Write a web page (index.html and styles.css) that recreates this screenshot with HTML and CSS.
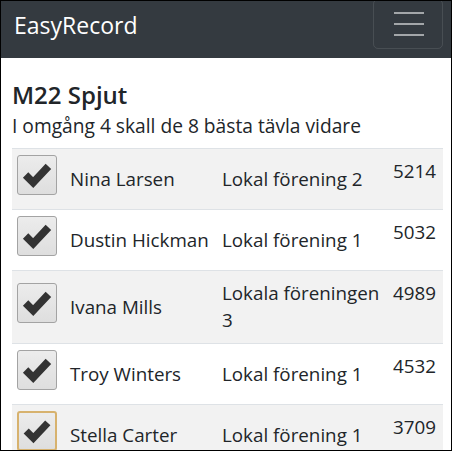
FILE: index.html
```html
<!DOCTYPE html>
<html lang="sv">
<head>
    <meta charset="UTF-8">
    <meta name="viewport" content="width=device-width, initial-scale=1.0">
    <title>EasyRecord</title>
    <link rel="stylesheet" href="styles.css">
</head>
<body>
<div class="frame">
    <nav class="navbar">
        <a class="brand" href="#">EasyRecord</a>
        <button class="toggler" type="button">
            <span class="bar"></span>
            <span class="bar"></span>
            <span class="bar"></span>
        </button>
    </nav>

    <div class="content">
        <h5 class="title">M22 Spjut</h5>
        <p class="info">I omgång 4 skall de 8 bästa tävla vidare</p>

        <table class="results">
            <colgroup>
                <col class="c-check">
                <col class="c-name">
                <col class="c-club">
                <col class="c-score">
            </colgroup>
            <tr>
                <td class="check"><span class="box"><svg viewBox="0 0 40 40"><polyline points="8,20 16,28 32,11"/></svg></span></td>
                <td>Nina Larsen</td>
                <td>Lokal förening 2</td>
                <td class="score">5214</td>
            </tr>
            <tr>
                <td class="check"><span class="box"><svg viewBox="0 0 40 40"><polyline points="8,20 16,28 32,11"/></svg></span></td>
                <td>Dustin Hickman</td>
                <td>Lokal förening 1</td>
                <td class="score">5032</td>
            </tr>
            <tr>
                <td class="check"><span class="box"><svg viewBox="0 0 40 40"><polyline points="8,20 16,28 32,11"/></svg></span></td>
                <td>Ivana Mills</td>
                <td>Lokala föreningen 3</td>
                <td class="score">4989</td>
            </tr>
            <tr>
                <td class="check"><span class="box"><svg viewBox="0 0 40 40"><polyline points="8,20 16,28 32,11"/></svg></span></td>
                <td>Troy Winters</td>
                <td>Lokal förening 1</td>
                <td class="score">4532</td>
            </tr>
            <tr>
                <td class="check"><span class="box focus"><svg viewBox="0 0 40 40"><polyline points="8,20 16,28 32,11"/></svg></span></td>
                <td>Stella Carter</td>
                <td>Lokal förening 1</td>
                <td class="score">3709</td>
            </tr>
        </table>
    </div>
</div>
</body>
</html>
```

FILE: styles.css
```css
body {
    margin: 0;
    font-family: "Open Sans", Arial, sans-serif;
    font-size: 18.8px;
    line-height: 27px;
    color: #212529;
    background: #fff;
}

.frame {
    width: 452px;
    height: 451px;
    border: 1px solid #000;
    box-sizing: border-box;
    overflow: hidden;
}

.navbar {
    display: flex;
    align-items: flex-start;
    height: 57px;
    background-color: #343a40;
}

.brand {
    margin: 11px 0 0 13px;
    font-size: 23px;
    line-height: 27.6px;
    color: #fff;
    text-decoration: none;
}

.toggler {
    display: flex;
    flex-direction: column;
    justify-content: center;
    gap: 8.5px;
    margin: -2px 8px 0 auto;
    padding: 0 19px 0 20px;
    width: 70px;
    height: 50px;
    box-sizing: border-box;
    background: transparent;
    border: 1px solid rgba(255, 255, 255, 0.1);
    border-radius: 5px;
}

.toggler .bar {
    display: block;
    width: 30px;
    height: 2.5px;
    background-color: rgba(255, 255, 255, 0.55);
}

.content {
    padding: 22px 7px 0 11px;
}

.title {
    margin: 0;
    font-size: 24px;
    font-weight: 600;
    line-height: 29px;
}

.info {
    margin: 3px 0 9px;
    font-size: 19.2px;
}

.results {
    width: 431px;
    border-collapse: collapse;
    table-layout: fixed;
}

.c-check { width: 52px; }
.c-name { width: 152px; }
.c-club { width: 171px; }
.c-score { width: 56px; }

.results td {
    padding: 9px 6px;
    border-top: 1px solid #dee2e6;
    vertical-align: middle;
}

.results tr:nth-child(odd) {
    background-color: #f2f2f2;
}

.results td.check {
    padding: 6px 6px 14px 5px;
}

.results td.score {
    vertical-align: top;
}

.box {
    display: block;
    width: 40px;
    height: 40px;
    box-sizing: border-box;
    border: 1px solid #a3a3a3;
    border-radius: 3px;
    background: linear-gradient(#ececec, #dedede);
}

.box.focus {
    border: 2px solid #d7b26e;
}

.box svg {
    display: block;
    width: 38px;
    height: 38px;
}

.box.focus svg {
    width: 36px;
    height: 36px;
}

.box polyline {
    fill: none;
    stroke: #333;
    stroke-width: 8;
}
```
